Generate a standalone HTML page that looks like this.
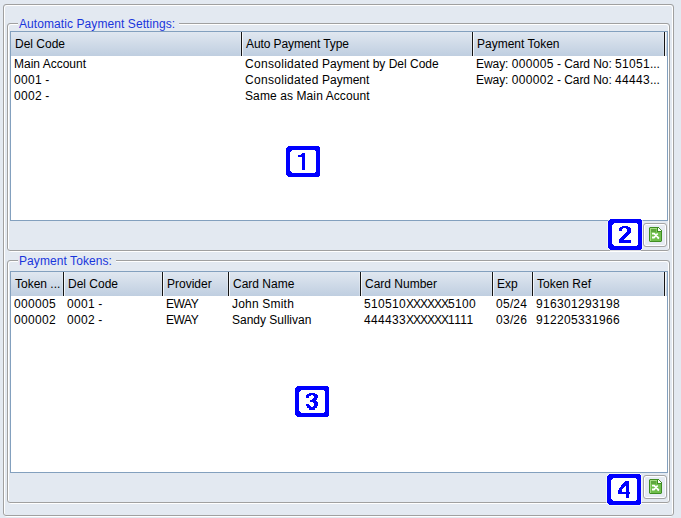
<!DOCTYPE html>
<html><head><meta charset="utf-8">
<style>
*{margin:0;padding:0;box-sizing:border-box}
html,body{width:681px;height:518px;overflow:hidden;background:#e3e9f1;font-family:"Liberation Sans",sans-serif;font-size:12px;color:#000}
.fg{position:absolute;border:1px solid #a0a0a0;border-radius:3px}
.fw{position:absolute;border:1px solid #fff;border-radius:3px}
.bg{position:absolute;border:1px solid #a4a4a4;border-radius:3px}
.bw{position:absolute;border:1px solid #fff;border-radius:2px;background:#e6ebf2}
.gtitle{position:absolute;color:#1a36dc;background:#e3e9f1;padding:0 4px 0 1px;line-height:14px;white-space:nowrap;letter-spacing:0.08px}
.grid{position:absolute;background:#fff;border:1px solid #83a0be}
.hdr{position:absolute;left:0;right:0;top:0;height:24px;background:linear-gradient(#e0e7f0,#bfcee0)}
.hc{position:absolute;top:0;height:24px;line-height:24px;padding-left:4px;white-space:nowrap}
.sep{position:absolute;top:0;height:24px;width:1px;background:#141414}
.sepw{position:absolute;top:0;height:24px;width:1px;background:rgba(255,255,255,0.75)}
.sepl{position:absolute;top:0;height:24px;width:1px;background:rgba(255,255,255,0.25)}
.cell{position:absolute;white-space:nowrap;line-height:16px}
.lbl{position:absolute}
.dg{letter-spacing:0.33px}
.xx{letter-spacing:-1px}
.cs{letter-spacing:0.3px}
.sm{letter-spacing:0.1px}
</style></head><body>
<div class="fw" style="left:4px;top:5px;width:669px;height:512px"></div><div class="fg" style="left:3px;top:4px;width:671px;height:512px"></div>
<div class="fw" style="left:8px;top:24px;width:661px;height:228px"></div><div class="fg" style="left:7px;top:23px;width:663px;height:228px"></div>
<div class="gtitle" style="left:18px;top:17px">Automatic Payment Settings:</div>
<div class="grid" style="left:10px;top:31px;width:658px;height:190px"><div class="hdr"><div class="hc" style="left:0px">Del Code</div><div class="sepl" style="left:229px"></div><div class="sep" style="left:230px"></div><div class="sepw" style="left:231px"></div><div class="hc" style="left:231px;letter-spacing:-0.1px">Auto Payment Type</div><div class="sepl" style="left:460px"></div><div class="sep" style="left:461px"></div><div class="sepw" style="left:462px"></div><div class="hc" style="left:462px">Payment Token</div><div class="sepl" style="left:652px"></div><div class="sep" style="left:653px"></div><div class="sepw" style="left:654px"></div></div><div class="cell" style="left:3px;top:24px">Main Account<br><span class="dg">0001</span> -<br><span class="dg">0002</span> -</div><div class="cell" style="left:234px;top:24px"><span class="cs">Consolidated</span> Payment by Del Code<br><span class="cs">Consolidated</span> Payment<br><span class="sm">Same as Main Account</span></div><div class="cell" style="left:465px;top:24px"><span style="letter-spacing:-0.06px">Eway: <span class="dg">000005</span> - Card No: <span class="dg">51051</span>...</span><br><span style="letter-spacing:-0.06px">Eway: <span class="dg">000002</span> - Card No: <span class="dg">44443</span>...</span></div></div>
<svg class="lbl" style="left:285px;top:145px" width="36" height="33" viewBox="-1 -1 36 33" shape-rendering="crispEdges"><path fill="#ffffff" opacity="0.6" d="M2,-1H32L35,2V29L32,32H2L-1,29V2Z"/><path fill-rule="evenodd" fill="#0000ff" d="M2,0H32L34,2V29L32,31H2L0,29V2ZM6,4H28L30,6V25L28,27H6L4,25V6Z"/><path fill="#fff" d="M6,4H28L30,6V25L28,27H6L4,25V6Z"/><path d="M16,7H19V24H16V11H12V9H15V8H16Z" fill="#0000ff"/></svg>
<svg class="lbl" style="left:607px;top:218px" width="36" height="33" viewBox="-1 -1 36 33" shape-rendering="crispEdges"><path fill="#ffffff" opacity="0.6" d="M2,-1H32L35,2V29L32,32H2L-1,29V2Z"/><path fill-rule="evenodd" fill="#0000ff" d="M2,0H32L34,2V29L32,31H2L0,29V2ZM6,4H28L30,6V25L28,27H6L4,25V6Z"/><path fill="#fff" d="M6,4H28L30,6V25L28,27H6L4,25V6Z"/><path d="M14,7h6v1h-6zM12,8h10v1h-10zM11,9h4v1h-4zM18,9h5v1h-5zM11,10h3v1h-3zM19,10h4v1h-4zM11,11h3v1h-3zM19,11h4v1h-4zM19,12h4v1h-4zM18,13h5v1h-5zM17,14h5v1h-5zM16,15h5v1h-5zM15,16h5v1h-5zM14,17h5v1h-5zM13,18h5v1h-5zM12,19h5v1h-5zM11,20h5v1h-5zM11,21h12v1h-12zM11,22h12v1h-12zM11,23h12v1h-12z" fill="#0000ff"/></svg>
<div class="bw" style="left:644px;top:224px;width:22px;height:22px"></div><div class="bg" style="left:643px;top:223px;width:24px;height:24px"></div><svg style="position:absolute;left:649px;top:227px" width="13" height="15" viewBox="0 0 13 15"><g shape-rendering="crispEdges"><path fill="#3f8d23" d="M1,0h9v1h-9zM0,1h1v1h-1zM8,1h1v1h-1zM0,2h1v1h-1zM8,2h1v1h-1zM0,3h1v1h-1zM8,3h1v1h-1zM12,3h1v1h-1zM0,4h1v1h-1zM8,4h5v1h-5zM0,5h1v1h-1zM12,5h1v1h-1zM0,6h1v1h-1zM12,6h1v1h-1zM0,7h1v1h-1zM12,7h1v1h-1zM0,8h1v1h-1zM12,8h1v1h-1zM0,9h1v1h-1zM12,9h1v1h-1zM0,10h1v1h-1zM12,10h1v1h-1zM0,11h1v1h-1zM12,11h1v1h-1zM0,12h1v1h-1zM12,12h1v1h-1zM0,13h1v1h-1zM12,13h1v1h-1zM1,14h11v1h-11z"/><path fill="#4f9636" d="M10,1h1v1h-1zM11,2h1v1h-1z"/><path fill="#a4db84" d="M1,1h7v1h-7zM1,2h1v1h-1zM1,3h1v1h-1zM1,4h1v1h-1zM1,5h1v1h-1zM1,6h1v1h-1zM1,7h1v1h-1zM1,8h1v1h-1zM1,9h1v1h-1zM1,10h1v1h-1zM1,11h1v1h-1zM1,12h1v1h-1zM1,13h1v1h-1z"/><path fill="#5ea73d" d="M2,2h5v1h-5zM2,3h5v1h-5zM2,4h5v1h-5z"/><path fill="#7cc65a" d="M7,2h1v1h-1zM7,3h1v1h-1zM7,4h1v1h-1z"/><path fill="#6fbe4b" d="M2,5h10v1h-10zM2,6h10v1h-10zM2,7h10v1h-10zM2,8h10v1h-10zM2,9h10v1h-10zM2,10h10v1h-10zM2,11h10v1h-10zM2,12h10v1h-10zM2,13h10v1h-10z"/><path fill="#ffffff" d="M9,1h1v1h-1zM9,2h2v1h-2zM9,3h3v1h-3z"/><rect x="0" y="0" width="1" height="1" fill="#3f8d23" opacity="0.45"/><rect x="0" y="14" width="1" height="1" fill="#3f8d23" opacity="0.45"/><rect x="12" y="14" width="1" height="1" fill="#3f8d23" opacity="0.45"/></g><path d="M3,6.6H5.2L9.4,10.9M3,10.5H5L8.7,6.5M8.6,10.4L10,11.4" fill="none" stroke="#fff" stroke-width="1.8" stroke-linecap="butt"/></svg>
<div class="fw" style="left:8px;top:261px;width:661px;height:243px"></div><div class="fg" style="left:7px;top:260px;width:663px;height:243px"></div>
<div class="gtitle" style="left:18px;top:254px">Payment Tokens:</div>
<div class="grid" style="left:10px;top:271px;width:658px;height:202px"><div class="hdr"><div class="hc" style="left:0px">Token ...</div><div class="sepl" style="left:51px"></div><div class="sep" style="left:52px"></div><div class="sepw" style="left:53px"></div><div class="hc" style="left:53px">Del Code</div><div class="sepl" style="left:150px"></div><div class="sep" style="left:151px"></div><div class="sepw" style="left:152px"></div><div class="hc" style="left:152px">Provider</div><div class="sepl" style="left:216px"></div><div class="sep" style="left:217px"></div><div class="sepw" style="left:218px"></div><div class="hc" style="left:218px">Card Name</div><div class="sepl" style="left:348px"></div><div class="sep" style="left:349px"></div><div class="sepw" style="left:350px"></div><div class="hc" style="left:350px">Card Number</div><div class="sepl" style="left:480px"></div><div class="sep" style="left:481px"></div><div class="sepw" style="left:482px"></div><div class="hc" style="left:482px">Exp</div><div class="sepl" style="left:520px"></div><div class="sep" style="left:521px"></div><div class="sepw" style="left:522px"></div><div class="hc" style="left:522px">Token Ref</div><div class="sepl" style="left:652px"></div><div class="sep" style="left:653px"></div><div class="sepw" style="left:654px"></div></div><div class="cell" style="left:3px;top:24px"><span class="dg">000005</span><br><span class="dg">000002</span></div><div class="cell" style="left:56px;top:24px"><span class="dg">0001</span> -<br><span class="dg">0002</span> -</div><div class="cell" style="left:155px;top:24px"><span style="letter-spacing:-0.4px">EWAY</span><br><span style="letter-spacing:-0.4px">EWAY</span></div><div class="cell" style="left:221px;top:24px"><span style="letter-spacing:0.2px">John Smith</span><br>Sandy Sullivan</div><div class="cell" style="left:353px;top:24px"><span class="dg">510510</span><span class="xx">XXXXXX</span><span class="dg">5100</span><br><span class="dg">444433</span><span class="xx">XXXXXX</span><span class="dg">1111</span></div><div class="cell" style="left:485px;top:24px"><span class="dg">05</span>/<span class="dg">24</span><br><span class="dg">03</span>/<span class="dg">26</span></div><div class="cell" style="left:525px;top:24px"><span class="dg">916301293198</span><br><span class="dg">912205331966</span></div></div>
<svg class="lbl" style="left:294px;top:385px" width="36" height="33" viewBox="-1 -1 36 33" shape-rendering="crispEdges"><path fill="#ffffff" opacity="0.6" d="M2,-1H32L35,2V29L32,32H2L-1,29V2Z"/><path fill-rule="evenodd" fill="#0000ff" d="M2,0H32L34,2V29L32,31H2L0,29V2ZM6,4H28L30,6V25L28,27H6L4,25V6Z"/><path fill="#fff" d="M6,4H28L30,6V25L28,27H6L4,25V6Z"/><path d="M14,7h6v1h-6zM12,8h10v1h-10zM11,9h5v1h-5zM18,9h5v1h-5zM11,10h3v1h-3zM19,10h4v1h-4zM11,11h3v1h-3zM19,11h4v1h-4zM18,12h4v1h-4zM17,13h5v1h-5zM15,14h6v1h-6zM15,15h7v1h-7zM18,16h5v1h-5zM19,17h4v1h-4zM11,18h3v1h-3zM19,18h4v1h-4zM11,19h4v1h-4zM19,19h4v1h-4zM12,20h4v1h-4zM18,20h4v1h-4zM12,21h10v1h-10zM14,22h6v1h-6zM14,23h6v1h-6z" fill="#0000ff"/></svg>
<svg class="lbl" style="left:606px;top:473px" width="36" height="33" viewBox="-1 -1 36 33" shape-rendering="crispEdges"><path fill="#ffffff" opacity="0.6" d="M2,-1H32L35,2V29L32,32H2L-1,29V2Z"/><path fill-rule="evenodd" fill="#0000ff" d="M2,0H32L34,2V29L32,31H2L0,29V2ZM6,4H28L30,6V25L28,27H6L4,25V6Z"/><path fill="#fff" d="M6,4H28L30,6V25L28,27H6L4,25V6Z"/><path d="M18,7h4v1h-4zM17,8h5v1h-5zM16,9h6v1h-6zM15,10h7v1h-7zM14,11h8v1h-8zM14,12h4v1h-4zM19,12h3v1h-3zM13,13h4v1h-4zM19,13h3v1h-3zM12,14h4v1h-4zM19,14h3v1h-3zM12,15h3v1h-3zM19,15h3v1h-3zM11,16h4v1h-4zM19,16h3v1h-3zM11,17h4v1h-4zM19,17h3v1h-3zM11,18h12v1h-12zM11,19h12v1h-12zM19,20h3v1h-3zM19,21h3v1h-3zM19,22h3v1h-3zM19,23h3v1h-3z" fill="#0000ff"/></svg>
<div class="bw" style="left:644px;top:476px;width:22px;height:22px"></div><div class="bg" style="left:643px;top:475px;width:24px;height:24px"></div><svg style="position:absolute;left:649px;top:479px" width="13" height="15" viewBox="0 0 13 15"><g shape-rendering="crispEdges"><path fill="#3f8d23" d="M1,0h9v1h-9zM0,1h1v1h-1zM8,1h1v1h-1zM0,2h1v1h-1zM8,2h1v1h-1zM0,3h1v1h-1zM8,3h1v1h-1zM12,3h1v1h-1zM0,4h1v1h-1zM8,4h5v1h-5zM0,5h1v1h-1zM12,5h1v1h-1zM0,6h1v1h-1zM12,6h1v1h-1zM0,7h1v1h-1zM12,7h1v1h-1zM0,8h1v1h-1zM12,8h1v1h-1zM0,9h1v1h-1zM12,9h1v1h-1zM0,10h1v1h-1zM12,10h1v1h-1zM0,11h1v1h-1zM12,11h1v1h-1zM0,12h1v1h-1zM12,12h1v1h-1zM0,13h1v1h-1zM12,13h1v1h-1zM1,14h11v1h-11z"/><path fill="#4f9636" d="M10,1h1v1h-1zM11,2h1v1h-1z"/><path fill="#a4db84" d="M1,1h7v1h-7zM1,2h1v1h-1zM1,3h1v1h-1zM1,4h1v1h-1zM1,5h1v1h-1zM1,6h1v1h-1zM1,7h1v1h-1zM1,8h1v1h-1zM1,9h1v1h-1zM1,10h1v1h-1zM1,11h1v1h-1zM1,12h1v1h-1zM1,13h1v1h-1z"/><path fill="#5ea73d" d="M2,2h5v1h-5zM2,3h5v1h-5zM2,4h5v1h-5z"/><path fill="#7cc65a" d="M7,2h1v1h-1zM7,3h1v1h-1zM7,4h1v1h-1z"/><path fill="#6fbe4b" d="M2,5h10v1h-10zM2,6h10v1h-10zM2,7h10v1h-10zM2,8h10v1h-10zM2,9h10v1h-10zM2,10h10v1h-10zM2,11h10v1h-10zM2,12h10v1h-10zM2,13h10v1h-10z"/><path fill="#ffffff" d="M9,1h1v1h-1zM9,2h2v1h-2zM9,3h3v1h-3z"/><rect x="0" y="0" width="1" height="1" fill="#3f8d23" opacity="0.45"/><rect x="0" y="14" width="1" height="1" fill="#3f8d23" opacity="0.45"/><rect x="12" y="14" width="1" height="1" fill="#3f8d23" opacity="0.45"/></g><path d="M3,6.6H5.2L9.4,10.9M3,10.5H5L8.7,6.5M8.6,10.4L10,11.4" fill="none" stroke="#fff" stroke-width="1.8" stroke-linecap="butt"/></svg>
</body></html>
